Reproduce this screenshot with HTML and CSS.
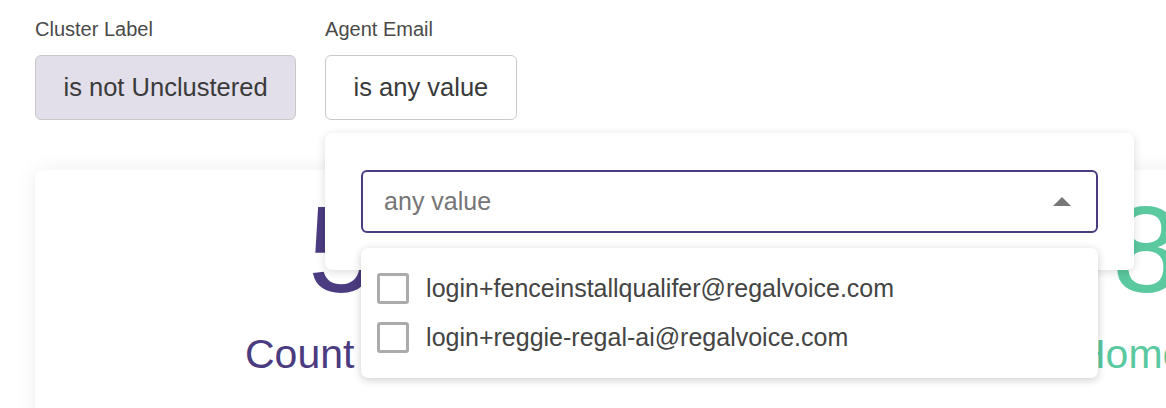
FILE: index.html
```html
<!DOCTYPE html>
<html lang="en">
<head>
<meta charset="utf-8">
<title>Filters</title>
<link rel="stylesheet" href="styles.css">
</head>
<body>
<div class="page">
  <div class="filters">
    <div class="filter">
      <div class="filter-label">Cluster Label</div>
      <button class="filter-btn active">is not Unclustered</button>
    </div>
    <div class="filter">
      <div class="filter-label">Agent Email</div>
      <button class="filter-btn">is any value</button>
      <div class="popover">
        <div class="select-wrap">
          <div class="select">
            <span class="select-placeholder">any value</span>
            <span class="caret"></span>
          </div>
          <ul class="options">
            <li class="option"><span class="checkbox"></span><span>login+fenceinstallqualifer@regalvoice.com</span></li>
            <li class="option"><span class="checkbox"></span><span>login+reggie-regal-ai@regalvoice.com</span></li>
          </ul>
        </div>
      </div>
    </div>
  </div>
  <div class="card">
    <div class="metrics">
      <div class="metric metric-purple">
        <div class="metric-value value-count">5</div>
        <div class="metric-label">Count</div>
      </div>
      <div class="metric metric-green">
        <div class="metric-value value-home">8</div>
        <div class="metric-label">Home</div>
      </div>
    </div>
  </div>
</div>
</body>
</html>
```

FILE: styles.css
```css
html, body {
  margin: 0;
  padding: 0;
  background: #ffffff;
  overflow: hidden;
  width: 1166px;
  height: 408px;
}

body {
  font-family: "Liberation Sans", Arial, Helvetica, sans-serif;
  color: #3c3c3c;
}

.page {
  padding: 17px 0 0 35px;
}

.filters {
  display: flex;
  gap: 29px;
  position: relative;
  z-index: 2;
}

.filter {
  position: relative;
  display: flex;
  flex-direction: column;
  align-items: flex-start;
}

.filter-label {
  font-size: 20px;
  line-height: 24px;
  color: #4a4a4a;
  margin-bottom: 14px;
}

.filter-btn {
  font-family: "Liberation Sans", Arial, Helvetica, sans-serif;
  font-size: 25.5px;
  color: #3a3a3a;
  height: 65px;
  padding: 0 27.5px;
  background: #ffffff;
  border: 1px solid #c9c9c9;
  border-radius: 6px;
  cursor: pointer;
}

.filter-btn.active {
  background: #e2dfea;
}

.popover {
  position: absolute;
  top: calc(100% + 13px);
  left: 0;
  width: 737px;
  padding: 37px 36px;
  background: #ffffff;
  border-radius: 7px;
  box-shadow: 0 2px 10px rgba(0, 0, 0, 0.14);
}

.select-wrap {
  position: relative;
}

.select {
  box-sizing: border-box;
  height: 63px;
  border: 2px solid #4b3b80;
  border-radius: 6px;
  display: flex;
  align-items: center;
  justify-content: space-between;
  padding: 0 25px 0 21px;
}

.select-placeholder {
  font-size: 25px;
  color: #767676;
}

.caret {
  width: 0;
  height: 0;
  border-left: 9px solid transparent;
  border-right: 9px solid transparent;
  border-bottom: 9px solid #777777;
  margin-top: -1px;
}

.options {
  position: absolute;
  top: calc(100% + 15px);
  left: 0;
  width: 100%;
  box-sizing: border-box;
  margin: 0;
  padding: 16px 0 16px 16px;
  list-style: none;
  background: #ffffff;
  border-radius: 7px;
  box-shadow: 0 2px 9px rgba(0, 0, 0, 0.2);
}

.option {
  height: 49px;
  display: flex;
  align-items: center;
  gap: 17px;
  font-size: 25px;
  color: #444444;
}

.checkbox {
  box-sizing: border-box;
  width: 32px;
  height: 31px;
  border: 3px solid #ababab;
  border-radius: 3px;
  background: #ffffff;
  flex: none;
}

.card {
  margin-top: 50px;
  width: 1300px;
  height: 400px;
  background: #ffffff;
  border-radius: 9px;
  box-shadow: 0 0 22px rgba(0, 0, 0, 0.07);
  padding-top: 19px;
  box-sizing: border-box;
  position: relative;
  z-index: 1;
}

.metrics {
  display: grid;
  grid-template-columns: 831px auto;
  padding-left: 210px;
}

.metric {
  display: flex;
  flex-direction: column;
  align-items: flex-start;
}

.metric-value {
  font-size: 122px;
  line-height: 1;
}

.value-count {
  margin-left: 63px;
}

.value-home {
  margin-left: 36px;
}

.metric-label {
  font-size: 41px;
  line-height: 1;
  margin-top: 23px;
}

.metric-purple {
  color: #4b3b80;
}

.metric-green {
  color: #5bc9a0;
}
```
